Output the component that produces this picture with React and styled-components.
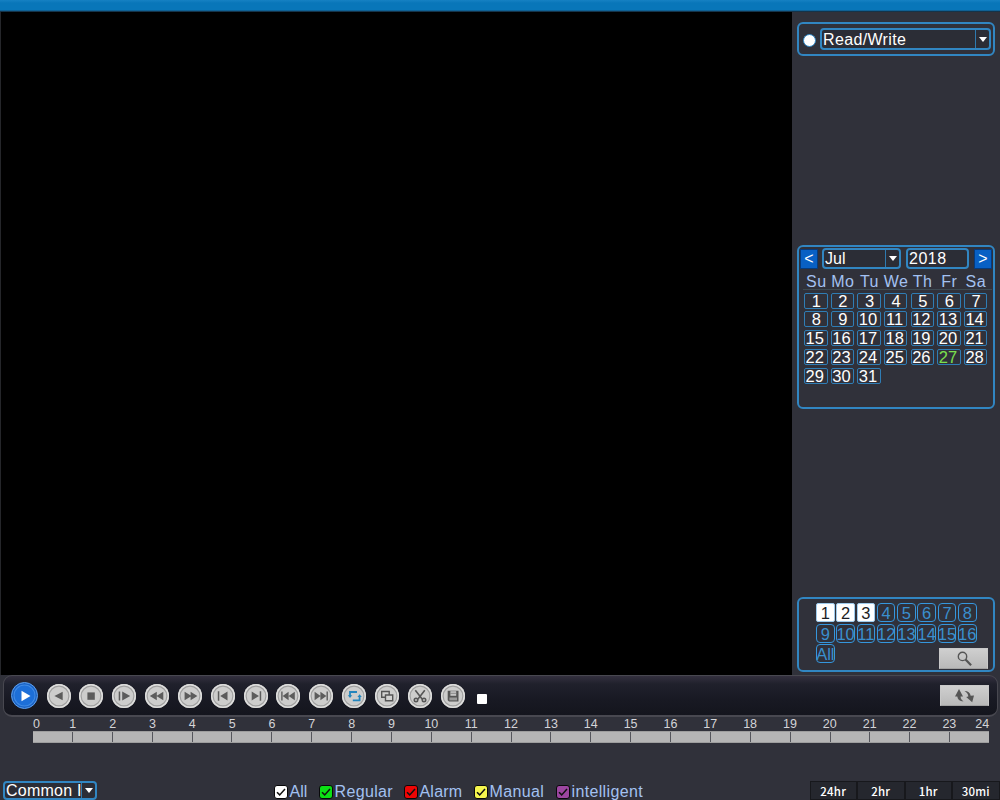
import styled, { createGlobalStyle, css } from "styled-components"

const dias = ["Su", "Mo", "Tu", "We", "Th", "Fr", "Sa"]
const datas = Array.from({ length: 31 }, (_, i) => i + 1)
const canais = Array.from({ length: 16 }, (_, i) => i + 1)
const horas = Array.from({ length: 24 }, (_, i) => i)

const filtros = [
    { nome: "All", cor: "#ffffff", largura: 45, espaco: "0px" },
    { nome: "Regular", cor: "#0be014", largura: 85, espaco: "0.35px" },
    { nome: "Alarm", cor: "#ee0505", largura: 70, espaco: "0.2px" },
    { nome: "Manual", cor: "#f6f64e", largura: 82, espaco: "0.35px" },
    { nome: "intelligent", cor: "#9c46a0", largura: 90, espaco: "0.35px" },
]

const icones = [
    <path d="M15.7 7.7v8.6L7.4 12z" />,
    <path d="M8.4 8.4h7.4v7.4H8.4z" />,
    <path d="M6.7 7.5h1.5v9H6.7zM10.2 7.5v9l8-4.5z" />,
    <path d="M11.8 7.8v8.4L4.8 12zM18.3 7.8v8.4L11.4 12z" />,
    <path d="M6.6 7.8v8.4l7-4.2zM12.6 7.8v8.4l6.8-4.2z" />,
    <path d="M6.8 7.2h1.5v9.6H6.8zM16.5 7.5v9l-7.3-4.5z" />,
    <path d="M7.7 7.5v9L15 12zM15.7 7.2h1.5v9.6h-1.5z" />,
    <path d="M5.2 7.5h1.4v9H5.2zM12.6 7.8v8.4L6.6 12zM18.8 7.8v8.4L12.6 12z" />,
    <path d="M5.6 7.8v8.4l6-4.2zM11.4 7.8v8.4l6-4.2zM17.5 7.5h1.4v9h-1.4z" />,
    <g fill="none" stroke="#2385bd" strokeWidth="1.8">
        <path d="M15 8H8v4M10.8 16.4h6.8v-4.2" />
        <path d="M5.8 11.2h4.400l-2.200 2.800zM15.400 13h4.400l-2.200-2.800z" fill="#2385bd" stroke="none" />
    </g>,
    <g fill="#d2d2d1" stroke="#555" strokeWidth="1.4">
        <path d="M6.7 7.5h7.5v5.7H6.7z" />
        <path d="M10.5 11h7.2v5.7h-7.2z" />
    </g>,
    <g fill="none" stroke="#555" strokeWidth="1.6">
        <path d="M7.3 6.3l7 9M16.8 6.3l-7 9" />
        <circle cx="8" cy="16" r="1.7" />
        <circle cx="16" cy="16" r="1.7" />
    </g>,
    <g>
        <path d="M6.7 6.7h10.8v10.8H8L6.7 16.3z" fill="#555" />
        <path d="M9.4 7.2h5.8v4.6H9.4z" fill="#c6c6c6" />
        <path d="M8.4 13.5h7.6v2.9H8.4z" fill="#999" />
        <path d="M9.4 9.3h5.8" stroke="#777" strokeWidth=".8" />
    </g>,
]

export default function App() {
    return (
        <Tela>
            <Global />
            <BarraTopo />
            <Conteudo>
                <Video />
                <Lateral>
                    <ModoPainel>
                        <Radio />
                        <Caixa $w={171} $h={22}>
                            <TextoCaixa $ls="0.35px">Read/Write</TextoCaixa>
                            <Seta />
                        </Caixa>
                    </ModoPainel>
                    <Calendario>
                        <Cabecalho>
                            <Navegar>&lt;</Navegar>
                            <Caixa $w={79} $h={21}>
                                <TextoCaixa $ls="0px">Jul</TextoCaixa>
                                <Seta />
                            </Caixa>
                            <Caixa $w={63} $h={21}>
                                <TextoCaixa $ls="0.5px">2018</TextoCaixa>
                            </Caixa>
                            <Navegar>&gt;</Navegar>
                        </Cabecalho>
                        <Semana>
                            {dias.map((d) => <span key={d}>{d}</span>)}
                        </Semana>
                        <Dias>
                            {datas.map((d) => <Dia key={d} $hoje={d === 27} $longo={d > 9}>{d}</Dia>)}
                        </Dias>
                    </Calendario>
                    <CanaisPainel>
                        <Canais>
                            {canais.map((c) => (
                                <Canal key={c} $ativo={c < 4}>{c}</Canal>
                            ))}
                            <Canal>All</Canal>
                        </Canais>
                        <BotaoCinza>
                            <svg width="18" height="18" viewBox="0 0 18 18" fill="none" stroke="#555">
                                <circle cx="7.5" cy="6.4" r="4.2" strokeWidth="1.4" />
                                <path d="M10.5 9.5l5.6 5.8" strokeWidth="2.2" />
                            </svg>
                        </BotaoCinza>
                    </CanaisPainel>
                </Lateral>
            </Conteudo>
            <Controles>
                <BotaoPlay>
                    <svg width="28" height="28" viewBox="0 0 28 28">
                        <path d="M10.5 8.8v10.4l9-5.2z" fill="#fff" />
                    </svg>
                </BotaoPlay>
                <Botoes>
                    {icones.map((icone, i) => (
                        <Botao key={i}>
                            <svg width="24" height="24" viewBox="0 0 24 24" fill="#5c5c5c">{icone}</svg>
                        </Botao>
                    ))}
                </Botoes>
                <Quadrado />
                <BotaoCinza>
                    <svg width="22" height="16" viewBox="0 0 22 16">
                        <path d="M5 1L1 8.5h2.300c.3 3 2.200 4.500 6.200 4.900-1.900-1.500-2.900-2.900-2.900-4.900H9z" fill="#555" />
                        <path d="M10.500 3c3.500 0 5.700 1.500 6.200 4.800L20 7.500l-1.800 6.800-6-5.300 2.100-.6c0-2-1.200-3.900-3.800-5.400z" fill="#555" />
                    </svg>
                </BotaoCinza>
            </Controles>
            <Regua>
                {horas.map((h) => <Hora key={h} $primeira={h === 0}>{h}</Hora>)}
                <Ultima>24</Ultima>
            </Regua>
            <Trilha>
                {horas.map((h) => <Trecho key={h} />)}
            </Trilha>
            <Rodape>
                <Caixa $w={94} $h={19}>
                    <TextoCaixa $ls="0.25px">Common I</TextoCaixa>
                    <Seta />
                </Caixa>
                <Filtros>
                    {filtros.map((f) => (
                        <Filtro key={f.nome} $w={f.largura} $ls={f.espaco}>
                            <Marca $cor={f.cor}>
                                <svg width="12" height="12" viewBox="0 0 12 12" fill="none" stroke="#111" strokeWidth="1.5">
                                    <path d="M2 6.2l2.7 2.7L10 3" />
                                </svg>
                            </Marca>
                            {f.nome}
                        </Filtro>
                    ))}
                </Filtros>
                <Escalas>
                    <Escala>24hr</Escala>
                    <Escala>2hr</Escala>
                    <Escala>1hr</Escala>
                    <Escala>30mi</Escala>
                </Escalas>
            </Rodape>
        </Tela>
    )
}

const Global = createGlobalStyle`
    * {
        box-sizing: border-box;
    }
    body {
        margin: 0;
        overflow: hidden;
        background-color: #30313a;
    }
    svg {
        display: block;
        flex-shrink: 0;
    }
`
const Tela = styled.div`
    width: 1000px;
    height: 800px;
    overflow: hidden;
    display: flex;
    flex-direction: column;
    background-color: #30313a;
    font-family: "Liberation Sans", Arial, sans-serif;
    color: #fff;
`
const BarraTopo = styled.div`
    height: 12px;
    flex-shrink: 0;
    background: linear-gradient(#1681c3 0, #0876b9 3px, #0876b9 10px, #174c70 11px, #121b24);
`
const Conteudo = styled.div`
    height: 663px;
    flex-shrink: 0;
    display: flex;
`
const Video = styled.div`
    width: 792px;
    background-color: #000;
    border-left: 1px solid #25262a;
`
const Lateral = styled.div`
    width: 208px;
    padding: 10px 5px 3px;
    display: flex;
    flex-direction: column;
    justify-content: space-between;
`
const painel = css`
    width: 198px;
    border: 2px solid #3186c2;
    border-radius: 6px;
`
const ModoPainel = styled.div`
    ${painel}
    height: 34px;
    display: flex;
    padding: 4px 0 0 4px;
    gap: 4px;
`
const Radio = styled.div`
    width: 13px;
    height: 13px;
    margin-top: 6px;
    border-radius: 50%;
    background-color: #fff;
    border: 1px solid #2e86c4;
`
const Caixa = styled.div`
    width: ${(p) => p.$w}px;
    height: ${(p) => p.$h}px;
    border: 2px solid #3186c2;
    border-radius: 4px;
    display: flex;
    flex-shrink: 0;
    align-items: center;
    background-color: #2b2d36;
`
const TextoCaixa = styled.span`
    flex: 1;
    min-width: 0;
    padding-left: 1px;
    font-size: 16px;
    line-height: 17px;
    letter-spacing: ${(p) => p.$ls};
    white-space: nowrap;
`
const Seta = styled.div`
    width: 14px;
    flex-shrink: 0;
    height: 100%;
    border-left: 1px solid #2e7ab0;
    display: flex;
    justify-content: center;
    align-items: center;
    &::after {
        content: "";
        border: 4px solid transparent;
        border-top: 5px solid #fff;
        border-bottom: 0;
    }
`
const Calendario = styled.div`
    ${painel}
    height: 164px;
    padding: 1px 1px 0;
`
const Cabecalho = styled.div`
    display: flex;
    height: 21px;
    & > :nth-child(2) {
        margin: 0 5px 0 4px;
    }
    & > :nth-child(4) {
        margin-left: 5px;
    }
`
const Navegar = styled.div`
    width: 18px;
    height: 20px;
    margin-top: 1px;
    background-color: #0860c4;
    border: 1px solid #063b7c;
    font-size: 16px;
    line-height: 17px;
    text-align: center;
`
const Semana = styled.div`
    display: flex;
    width: 189px;
    height: 21px;
    margin-left: 3px;
    border-bottom: 1px solid #3d4b53;
    color: #a3c1f1;
    font-size: 16px;
    line-height: 25px;
    letter-spacing: 0.5px;
    span {
        width: 26.6px;
        flex-shrink: 0;
        display: flex;
        justify-content: center;
        white-space: nowrap;
    }
`
const Dias = styled.div`
    display: grid;
    grid-template-columns: repeat(7, 23.5px);
    grid-auto-rows: 16px;
    column-gap: 3.15px;
    row-gap: 2.8px;
    padding: 3px 0 0 4px;
`
const Dia = styled.div`
    border: 1px solid #2f7db5;
    border-radius: 2px;
    display: flex;
    justify-content: center;
    padding-right: ${(p) => (p.$longo ? 2 : 0)}px;
    padding-left: ${(p) => (p.$longo ? 0 : 1)}px;
    font-size: 16.5px;
    line-height: 15px;
    color: ${(p) => (p.$hoje ? "#7be04e" : "#fff")};
`
const CanaisPainel = styled.div`
    ${painel}
    height: 75px;
    display: flex;
    flex-wrap: wrap;
    align-items: flex-end;
    justify-content: flex-end;
    padding: 4px 5px 1px 17px;
`
const Canais = styled.div`
    width: 100%;
    height: 45px;
    display: grid;
    grid-template-columns: repeat(8, 18.6px);
    grid-auto-rows: 19px;
    column-gap: 1.7px;
    row-gap: 1.5px;
`
const Canal = styled.div`
    border: 1px solid ${(p) => (p.$ativo ? "#9fcbec" : "#3596dd")};
    border-radius: ${(p) => (p.$ativo ? 2 : 4)}px;
    display: flex;
    justify-content: center;
    font-size: 16.5px;
    line-height: 18px;
    color: ${(p) => (p.$ativo ? "#1b1d24" : "#3a8fce")};
    background-color: ${(p) => (p.$ativo ? "#fff" : "transparent")};
`
const BotaoCinza = styled.div`
    width: 49px;
    height: 21px;
    display: flex;
    align-items: center;
    justify-content: center;
    background: linear-gradient(#cfcfcf, #b9b9b9);
    border: 1px solid #c9c9c9;
    border-bottom-color: #a2a2a2;
`
const Controles = styled.div`
    height: 42px;
    flex-shrink: 0;
    margin: 0 2px 0 3px;
    padding: 0 8px 0 7px;
    border: 1px solid #484850;
    border-bottom-width: 2px;
    border-radius: 9px;
    background: linear-gradient(#34303f 0, #20212c 8px, #181923 24px, #14151d);
    display: flex;
    align-items: center;
    & > :last-child {
        margin-left: auto;
    }
`
const BotaoPlay = styled.div`
    width: 27px;
    height: 27px;
    border-radius: 50%;
    border: 1px solid #5d9ce8;
    background-color: #1d6fd8;
    box-shadow: inset 0 0 0 1.5px #1b63c4, inset 0 0 0 2.5px #3f8ae4;
    display: flex;
    align-items: center;
    justify-content: center;
`
const Botoes = styled.div`
    display: flex;
    gap: 8.85px;
    margin-left: 8.5px;
`
const Botao = styled.div`
    width: 24px;
    height: 24px;
    border-radius: 50%;
    background-color: #cdcdcc;
    box-shadow: inset 0 0 0 1.5px #dededd, inset 0 0 0 2.7px #a1a1a1;
`
const Quadrado = styled.div`
    width: 10px;
    height: 10px;
    margin: 7px 0 0 12px;
    border-radius: 1px;
    background-color: #fff;
`
const Regua = styled.div`
    display: flex;
    width: 956px;
    height: 14px;
    margin-left: 33px;
    flex-shrink: 0;
    color: #d4d4d8;
    font-size: 12.5px;
    line-height: 15px;
`
const Hora = styled.span`
    width: 39.85px;
    flex-shrink: 0;
    display: flex;
    justify-content: center;
    position: relative;
    left: ${(p) => (p.$primeira ? -16.5 : -20)}px;
`
const Ultima = styled.span`
    margin-left: -14px;
`
const Trilha = styled.div`
    display: flex;
    width: 956px;
    height: 12px;
    margin-left: 33px;
    flex-shrink: 0;
    background-color: #b5b5b5;
    border-top: 1px solid #9e9e9e;
    border-bottom: 1px solid #9e9e9e;
`
const Trecho = styled.div`
    flex: 1;
    border-right: 1px solid #55565c;
    &:last-child {
        border: 0;
    }
`
const Rodape = styled.div`
    margin-top: 38px;
    height: 19px;
    flex-shrink: 0;
    display: flex;
    padding-left: 3px;
`
const Filtros = styled.div`
    display: flex;
    width: 536px;
    margin-left: 176.5px;
    color: #a3c1f1;
`
const Filtro = styled.div`
    width: ${(p) => p.$w}px;
    display: flex;
    align-items: center;
    gap: 2px;
    padding-top: 2px;
    font-size: 16px;
    line-height: 16px;
    letter-spacing: ${(p) => p.$ls};
`
const Marca = styled.div`
    width: 14px;
    height: 14px;
    flex-shrink: 0;
    border: 1px solid #08080a;
    border-radius: 3px;
    background-color: ${(p) => p.$cor};
`
const Escalas = styled.div`
    display: flex;
    width: 190px;
`
const Escala = styled.div`
    width: 47.5px;
    height: 19px;
    border: 1px solid #17181c;
    background-color: #25272e;
    display: flex;
    justify-content: center;
    font-family: "Noto Sans CJK SC", sans-serif;
    font-weight: 500;
    font-size: 11.5px;
    line-height: 18px;
    letter-spacing: 0.2px;
`
